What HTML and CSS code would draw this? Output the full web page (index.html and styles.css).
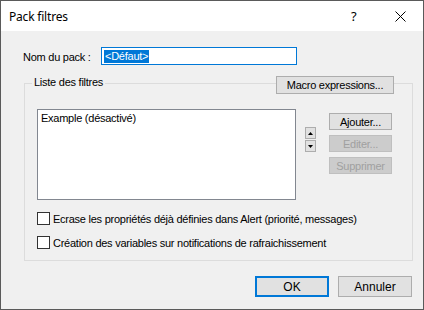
FILE: index.html
```html
<!DOCTYPE html>
<html lang="fr">
<head>
<meta charset="utf-8">
<title>Pack filtres</title>
<link rel="stylesheet" href="styles.css">
</head>
<body>
<div class="window">
  <div class="titlebar">
    <span class="title">Pack filtres</span>
    <span class="tb-help">?</span>
    <span class="tb-close">
      <svg width="11" height="11" viewBox="0 0 11 11"><path d="M0.5 0.5 L10.5 10.5 M10.5 0.5 L0.5 10.5" stroke="#000" stroke-width="1" fill="none"/></svg>
    </span>
  </div>
  <div class="content">
    <div class="name-row">
      <label class="name-label">Nom du pack :</label>
      <div class="input"><span class="sel">&lt;Défaut&gt;</span></div>
    </div>
    <div class="group">
      <span class="legend">Liste des filtres</span>
      <button class="btn macro">Macro expressions...</button>
      <div class="list-row">
        <div class="listbox">Example (désactivé)</div>
        <div class="updown">
          <span class="arrow"><svg width="5" height="3" viewBox="0 0 5 3"><path d="M2.5 0 L5 3 L0 3 Z" fill="#000"/></svg></span>
          <span class="arrow"><svg width="5" height="3" viewBox="0 0 5 3"><path d="M0 0 L5 0 L2.5 3 Z" fill="#000"/></svg></span>
        </div>
        <div class="actions">
          <button class="btn small">Ajouter...</button>
          <button class="btn small disabled">Editer...</button>
          <button class="btn small disabled">Supprimer</button>
        </div>
      </div>
      <div class="checks">
        <label class="check"><span class="box"></span>Ecrase les propriétés déjà définies dans Alert (priorité, messages)</label>
        <label class="check"><span class="box"></span>Création des variables sur notifications de rafraichissement</label>
      </div>
    </div>
    <div class="footer">
      <button class="btn dlg default">OK</button>
      <button class="btn dlg">Annuler</button>
    </div>
  </div>
</div>
</body>
</html>
```
FILE: styles.css
```css
html, body {
  margin: 0;
  padding: 0;
  background: #ffffff;
}
.window {
  width: 424px;
  height: 310px;
  box-sizing: border-box;
  border: 1px solid #5a5a5a;
  background: #f0f0f0;
  display: flex;
  flex-direction: column;
  font-family: "Liberation Sans", Arial, sans-serif;
  font-size: 11px;
  letter-spacing: -0.25px;
  color: #000;
}
.titlebar {
  height: 30px;
  background: #ffffff;
  display: flex;
  align-items: center;
  font-family: "Noto Sans", "Open Sans", sans-serif;
  font-size: 12px;
  letter-spacing: -0.2px;
}
.title {
  margin-left: 8px;
  flex: 1;
}
.tb-help {
  font-size: 13px;
  width: 10px;
  margin-right: 34px;
}
.tb-close {
  display: flex;
  margin-right: 17px;
}
.content {
  flex: 1;
  display: flex;
  flex-direction: column;
  padding: 16px 10px 0 23px;
}
.name-row {
  display: flex;
  align-items: center;
  height: 18px;
}
.name-label {
  width: 78px;
  margin-left: -1px;
  padding-top: 1px;
}
.input {
  width: 196px;
  height: 18px;
  box-sizing: border-box;
  border: 1px solid #0078d7;
  background: #fff;
  display: flex;
  align-items: center;
  padding-left: 2px;
}
.sel {
  background: #0078d7;
  color: #fff;
  line-height: 13px;
  padding: 0 1px;
}
.group {
  position: relative;
  margin-top: 18px;
  width: 389px;
  height: 178px;
  box-sizing: border-box;
  border: 1px solid #dcdcdc;
  padding: 25px 20px 0 12px;
  display: flex;
  flex-direction: column;
}
.legend {
  position: absolute;
  left: 7px;
  top: -8px;
  padding: 0 2px;
  background: #f0f0f0;
  line-height: 13px;
}
.btn {
  font-family: "Liberation Sans", Arial, sans-serif;
  font-size: 11px;
  letter-spacing: -0.25px;
  color: #000;
  background: #e1e1e1;
  border: 1px solid #adadad;
  padding: 0;
  margin: 0;
  box-sizing: border-box;
}
.macro {
  position: absolute;
  top: -8px;
  right: 18px;
  width: 118px;
  height: 18px;
}
.list-row {
  display: flex;
  align-items: flex-start;
}
.listbox {
  width: 259px;
  height: 91px;
  box-sizing: border-box;
  border: 1px solid #828790;
  background: #fff;
  padding: 2px 0 0 3px;
  line-height: 13px;
}
.updown {
  display: flex;
  flex-direction: column;
  gap: 1px;
  margin-left: 9px;
  margin-top: 18px;
}
.arrow {
  width: 11px;
  height: 12px;
  box-sizing: border-box;
  border: 1px solid #adadad;
  background: #e1e1e1;
  display: flex;
  align-items: center;
  justify-content: center;
}
.actions {
  display: flex;
  flex-direction: column;
  gap: 5px;
  margin-left: 13px;
  margin-top: 4px;
}
.btn.small {
  width: 63px;
  height: 17px;
}
.btn.disabled {
  color: #a0a0a0;
  background: #cccccc;
  border-color: #bfbfbf;
}
.checks {
  display: flex;
  flex-direction: column;
  gap: 11px;
  margin-top: 12px;
}
.check {
  display: flex;
  align-items: center;
  height: 13px;
}
.box {
  width: 13px;
  height: 13px;
  box-sizing: border-box;
  border: 1px solid #333;
  background: #fff;
  margin-right: 3px;
}
.footer {
  display: flex;
  justify-content: flex-end;
  gap: 9px;
  margin-top: 15px;
  padding-right: 1px;
}
.btn.dlg {
  width: 74px;
  height: 21px;
  font-size: 12px;
  letter-spacing: 0;
}
.btn.default {
  border: 2px solid #0078d7;
}
```
